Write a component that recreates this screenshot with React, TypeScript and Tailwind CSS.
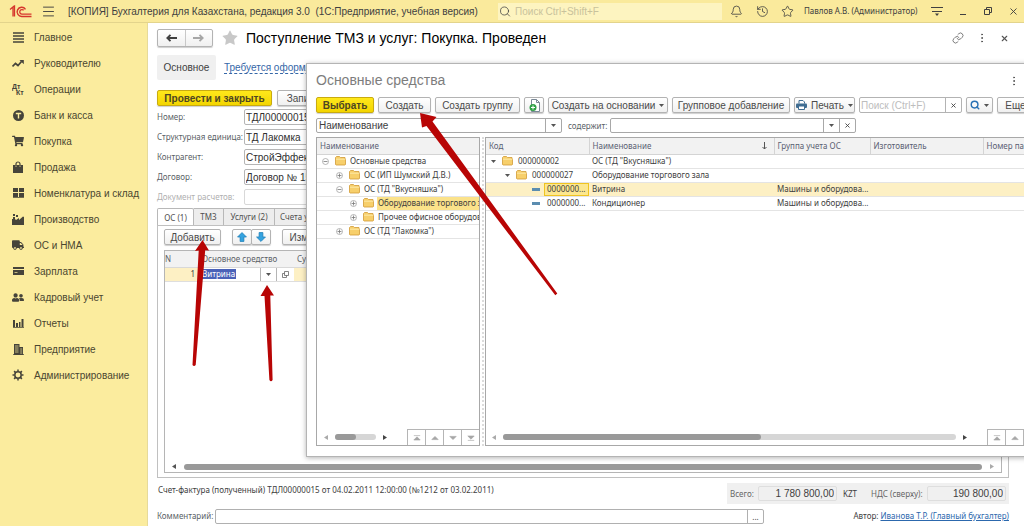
import type { ReactNode } from "react";
import {
  Bell,
  History,
  Link as LinkIcon,
  Menu,
  MoreVertical,
  Search,
  Star,
  X,
} from "lucide-react";
import { FaShoppingBag, FaShoppingCart, FaTruck, FaUserFriends } from "react-icons/fa";

type NavItem = { label: string; icon: ReactNode };

type TreeNode = {
  label: string;
  level: 0 | 1 | 2;
  open?: boolean;
  selected?: boolean;
};

type AssetRow = {
  id: number;
  code: string;
  name: string;
  group?: string;
  level: 0 | 1 | 2;
  folder?: boolean;
  selected?: boolean;
};

const smallTextClass = "font-['Noto_Sans',sans-serif] text-[8px]";
const buttonClass =
  "flex h-4 shrink-0 items-center justify-center gap-1 whitespace-nowrap rounded-xs border border-[#b3b3b3] bg-linear-to-b from-white to-[#f0f0f0] text-[10px] text-[#4a4a4a] shadow-[0_1px_1px_#cfcfcf]";
const primaryClass =
  "flex h-4 shrink-0 items-center justify-center whitespace-nowrap rounded-xs border border-[#c9ab10] bg-linear-to-b from-[#ffe81a] to-[#f3d500] text-[10px] font-bold text-[#4d4622] shadow-[0_1px_1px_#cfcfcf]";
const headCellClass =
  "whitespace-nowrap border-r border-[#d4d4d4] px-[3px] text-left font-normal text-[#5a5f73]";

const navItems: NavItem[] = [
  { label: "Главное", icon: <LinesIcon /> },
  { label: "Руководителю", icon: <TrendIcon /> },
  { label: "Операции", icon: <DebitCreditIcon /> },
  { label: "Банк и касса", icon: <CoinIcon /> },
  { label: "Покупка", icon: <FaShoppingCart size={12} /> },
  { label: "Продажа", icon: <BagIcon /> },
  { label: "Номенклатура и склад", icon: <BlocksIcon /> },
  { label: "Производство", icon: <FactoryIcon /> },
  { label: "ОС и НМА", icon: <FaTruck size={12} /> },
  { label: "Зарплата", icon: <CardIcon /> },
  { label: "Кадровый учет", icon: <FaUserFriends size={13} /> },
  { label: "Отчеты", icon: <BarsIcon /> },
  { label: "Предприятие", icon: <BuildingIcon /> },
  { label: "Администрирование", icon: <GearIcon /> },
];

const treeNodes: TreeNode[] = [
  { label: "Основные средства", level: 0, open: true },
  { label: "ОС (ИП Шумский Д.В.)", level: 1 },
  { label: 'ОС (ТД "Вкусняшка")', level: 1, open: true },
  { label: "Оборудование торгового зала", level: 2, selected: true },
  { label: "Прочее офисное оборудование", level: 2 },
  { label: 'ОС (ТД "Лакомка")', level: 1 },
];

const assetRows: AssetRow[] = [
  { id: 1, code: "000000002", name: 'ОС (ТД "Вкусняшка")', level: 0, folder: true },
  { id: 2, code: "000000027", name: "Оборудование торгового зала", level: 1, folder: true },
  {
    id: 3,
    code: "0000000...",
    name: "Витрина",
    group: "Машины и оборудова...",
    level: 2,
    selected: true,
  },
  {
    id: 4,
    code: "0000000...",
    name: "Кондиционер",
    group: "Машины и оборудова...",
    level: 2,
  },
];

const fields = [
  { id: "number", label: "Номер:", value: "ТДЛ00000015" },
  { id: "unit", label: "Структурная единица:", value: "ТД Лакомка" },
  { id: "partner", label: "Контрагент:", value: "СтройЭффект" },
  { id: "contract", label: "Договор:", value: "Договор № 15" },
  { id: "settlement", label: "Документ расчетов:", value: "", disabled: true },
];

export default function App() {
  return (
    <div className="relative flex min-h-screen flex-col overflow-hidden bg-white font-['Liberation_Sans',sans-serif] text-[10px] text-[#404040]">
      <TopBar />
      <div className="flex flex-1">
        <Sidebar />
        <main className="relative flex min-w-0 flex-1 flex-col overflow-hidden">
          <ReceiptForm />
          <AssetsDialog />
        </main>
      </div>
      <Pointers />
    </div>
  );
}

function TopBar() {
  return (
    <header className="flex h-[23px] shrink-0 items-center border-b border-[#e3d48c] bg-[#faea9c]">
      <div className="flex w-[68px] shrink-0 items-center gap-[9px] pl-[9px]">
        <LogoIcon />
        <button type="button" aria-label="Меню">
          <Menu size={15} strokeWidth={1.5} />
        </button>
      </div>
      <h1 className="w-[430px] shrink-0 whitespace-pre">
        [КОПИЯ] Бухгалтерия для Казахстана, редакция 3.0 {" "}(1С:Предприятие, учебная версия)
      </h1>
      <label className="flex h-[17px] flex-1 items-center gap-1 bg-[#fdf4c0] pl-px">
        <Search size={13} strokeWidth={1.5} />
        <input
          className="w-full bg-transparent outline-none placeholder:text-[#c9c29c]"
          placeholder="Поиск Ctrl+Shift+F"
          type="search"
        />
      </label>
      <div className="flex w-[302px] shrink-0 items-center pl-2">
        <button className="w-[26px]" type="button" aria-label="Уведомления">
          <Bell size={13} strokeWidth={1.5} />
        </button>
        <button className="w-[25px]" type="button" aria-label="История">
          <History size={13} strokeWidth={1.5} />
        </button>
        <button className="w-[23px]" type="button" aria-label="Избранное">
          <Star size={13} strokeWidth={1.5} />
        </button>
        <span className={`w-[127px] whitespace-nowrap ${smallTextClass}`}>
          Павлов А.В. (Администратор)
        </span>
        <button className="w-[28px]" type="button" aria-label="Настройки">
          <svg width="12" height="12" viewBox="0 0 12 12">
            <path d="M0 2.500h12M1 6.500h10" stroke="#404040" />
            <path d="M4 8.500h4l-2 2.500z" fill="#404040" />
          </svg>
        </button>
        <button className="w-[25px]" type="button" aria-label="Свернуть">
          <svg width="8" height="10" viewBox="0 0 8 10">
            <path d="M1 8.500h6" stroke="#404040" />
          </svg>
        </button>
        <button className="w-[24px]" type="button" aria-label="Восстановить">
          <svg width="8" height="8" viewBox="0 0 8 8" fill="none" stroke="#404040">
            <path d="M.5 2.500h5v5h-5zM2.500 2.500v-2h5v5h-2" />
          </svg>
        </button>
        <button type="button" aria-label="Закрыть">
          <X size={11} strokeWidth={2} />
        </button>
      </div>
    </header>
  );
}

function Sidebar() {
  return (
    <nav className="w-[148px] shrink-0 border-r border-[#e6da9a] bg-[#fbec9e] pt-px">
      <ul>
        {navItems.map((item) => (
          <li key={item.label}>
            <a className="flex h-[26px] items-center gap-[10px] pl-3 text-[#4a4630]" href="#">
              <span className="flex w-3 justify-center text-[#46443a]">{item.icon}</span>
              {item.label}
            </a>
          </li>
        ))}
      </ul>
    </nav>
  );
}

function ReceiptForm() {
  return (
    <form className="flex flex-1 flex-col pt-[5px] pr-[15px] pb-[2px] pl-[9px]">
      <div className="flex h-5 items-center">
        <div className="flex h-[18px] w-14 rounded-xs border border-[#b3b3b3] bg-linear-to-b from-white to-[#f0f0f0] shadow-[0_1px_1px_#cfcfcf]">
          <button
            className="flex flex-1 items-center justify-center border-r border-[#c8c8c8]"
            type="button"
            aria-label="Назад"
          >
            <ArrowIcon color="#404040" />
          </button>
          <button
            className="flex flex-1 items-center justify-center"
            type="button"
            aria-label="Вперед"
          >
            <span className="rotate-180">
              <ArrowIcon color="#a6a6a6" />
            </span>
          </button>
        </div>
        <Star className="ml-2 shrink-0" size={18} fill="#c8c8c8" stroke="none" />
        <h2 className="ml-[7px] flex-1 text-[14px] whitespace-nowrap text-black">
          Поступление ТМЗ и услуг: Покупка. Проведен
        </h2>
        <div className="flex w-[57px] items-center justify-between text-[#555]">
          <LinkIcon size={12} strokeWidth={1.5} />
          <MoreVertical size={12} />
          <X size={9} strokeWidth={3} />
        </div>
      </div>

      <div className="mt-[7px] flex h-[25px] items-center gap-2">
        <a
          className="flex h-full w-[59px] items-center justify-center rounded-xs bg-[#f0f0f0]"
          href="#"
        >
          Основное
        </a>
        <a
          className="border-b border-dashed border-[#3567a8] leading-[11px] whitespace-nowrap text-[#3567a8]"
          href="#"
        >
          Требуется оформление
        </a>
      </div>

      <div className="mt-[10px] flex gap-[5px]">
        <button className={`${primaryClass} w-[115px]`} type="button">
          Провести и закрыть
        </button>
        <button className={`${buttonClass} w-[62px]`} type="button">
          Записать
        </button>
      </div>

      <div className="mt-[3px] grid gap-1">
        {fields.map((field) => (
          <div key={field.id} className="flex h-4 items-center">
            <label
              className={
                field.disabled
                  ? `w-[87px] whitespace-nowrap text-[#b0b0b0] ${smallTextClass}`
                  : `w-[87px] whitespace-nowrap text-[#5a5f66] ${smallTextClass}`
              }
              htmlFor={field.id}
            >
              {field.label}
            </label>
            <input
              className="h-4 w-[200px] rounded-xs border border-[#b5b5b5] px-px text-[10px] text-[#303030] disabled:border-[#d8d8d8]"
              defaultValue={field.value}
              disabled={field.disabled}
              id={field.id}
              type="text"
            />
          </div>
        ))}
      </div>

      <div className={`mt-[3px] flex h-[17px] text-[#505050] ${smallTextClass}`}>
        <button
          className="-mb-px w-[37px] rounded-t-xs border border-b-0 border-[#b8b8b8] bg-white"
          type="button"
        >
          ОС (1)
        </button>
        <button className="w-[30px] border-t border-r border-[#b8b8b8] bg-[#ededed]" type="button">
          ТМЗ
        </button>
        <button className="w-[51px] border-t border-r border-[#b8b8b8] bg-[#ededed]" type="button">
          Услуги (2)
        </button>
        <button
          className="w-[72px] border-t border-r border-[#b8b8b8] bg-[#ededed] pl-[5px] text-left whitespace-nowrap"
          type="button"
        >
          Счета учета
        </button>
      </div>

      <section className="flex flex-1 flex-col border border-[#c0c0c0] px-1.5 pt-[3px] pb-1">
        <div className="flex">
          <button className={`${buttonClass} w-[57px]`} type="button">
            Добавить
          </button>
          <div className="ml-[11px] flex">
            <button className={`${buttonClass} w-5`} type="button" aria-label="Вверх">
              <BlueArrow />
            </button>
            <button className={`${buttonClass} -ml-px w-5`} type="button" aria-label="Вниз">
              <span className="rotate-180">
                <BlueArrow />
              </span>
            </button>
          </div>
          <button className={`${buttonClass} ml-[11px] w-[60px]`} type="button">
            Изменить
          </button>
        </div>

        <div className="mt-[5px] flex flex-1 flex-col border border-[#b5b5b5]">
          <table className={`w-full table-fixed ${smallTextClass}`}>
            <colgroup>
              <col className="w-[35px]" />
              <col className="w-[94px]" />
              <col />
            </colgroup>
            <thead>
              <tr className="h-4 border-b border-[#d8d8d8] bg-[#f2f2f2] text-left text-[#5a5f66]">
                <th className="font-normal">N</th>
                <th className="pl-0.5 font-normal">Основное средство</th>
                <th className="pl-[3px] font-normal">Сумма</th>
              </tr>
            </thead>
            <tbody>
              <tr className="h-[14px] border-b border-[#dedede] bg-[#fdf0c4]">
                <td className="pr-[5px] text-right">1</td>
                <td className="bg-white">
                  <div className="flex h-[13px] items-center pl-0.5">
                    <input
                      aria-label="Основное средство"
                      className="h-[10px] w-[34px] bg-[#4a62b8] leading-[10px] text-white"
                      defaultValue="Витрина"
                      type="text"
                    />
                    <button
                      className="ml-6 flex h-full w-[17px] items-center justify-center border-x border-[#b5b5b5]"
                      type="button"
                      aria-label="Выбрать"
                    >
                      <Caret />
                    </button>
                    <button
                      className="flex h-full w-4 items-center justify-center"
                      type="button"
                      aria-label="Открыть"
                    >
                      <svg
                        width="7"
                        height="7"
                        viewBox="0 0 7 7"
                        fill="none"
                        stroke="#666"
                        strokeWidth=".8"
                      >
                        <path d="M2.500 .5h4v4h-4zM2.500 2.500h-2v4h4v-2" />
                      </svg>
                    </button>
                  </div>
                </td>
                <td />
              </tr>
            </tbody>
          </table>
          <div className="mt-auto flex h-[11px] items-center gap-2 px-[7px]">
            <Triangle dir="left" color="#555" />
            <div className="h-1.5 flex-1 rounded-full bg-[#999]" />
            <Triangle dir="right" color="#aaa" />
          </div>
        </div>
      </section>

      <div className={`mt-[5px] flex h-[21px] items-center justify-between ${smallTextClass}`}>
        <span className="pb-2 pl-px whitespace-nowrap">
          Счет-фактура (полученный) ТДЛ00000015 от 04.02.2011 12:00:00 (№1212 от 03.02.2011)
        </span>
        <div className="flex h-full items-center bg-[#f0f0f0] px-[3px] whitespace-nowrap text-[#666]">
          <label className="w-7" htmlFor="total">
            Всего:
          </label>
          <input
            className="h-[15px] w-[79px] rounded-xs border border-[#dedede] pr-0.5 text-right font-['Liberation_Sans',sans-serif] text-[10px] text-[#404040]"
            defaultValue="1 780 800,00"
            id="total"
            readOnly
          />
          <span className="ml-1.5 w-[28px] text-[#404040]">KZT</span>
          <label className="w-[56px]" htmlFor="vat">
            НДС (сверху):
          </label>
          <input
            className="h-[15px] w-[79px] rounded-xs border border-[#dedede] pr-0.5 text-right font-['Liberation_Sans',sans-serif] text-[10px] text-[#404040]"
            defaultValue="190 800,00"
            id="vat"
            readOnly
          />
        </div>
      </div>

      <div className={`mt-1 flex h-4 items-center ${smallTextClass}`}>
        <label className="w-[58px] text-[#5a5f66]" htmlFor="comment">
          Комментарий:
        </label>
        <div className="flex h-[15px] w-[549px] rounded-xs border border-[#b0b0b0]">
          <input className="min-w-0 flex-1 px-1" id="comment" type="text" />
          <button className="w-4 border-l border-[#b0b0b0] leading-[9px]" type="button">
            ...
          </button>
        </div>
        <p className="ml-auto whitespace-nowrap">
          Автор:{" "}
          <a className="text-[#2c68ad] underline" href="#">
            Иванова Т.Р. (Главный бухгалтер)
          </a>
        </p>
      </div>
    </form>
  );
}

function AssetsDialog() {
  return (
    <section
      aria-label="Основные средства"
      className="absolute top-10 -right-[46px] bottom-[69px] left-[158px] flex flex-col border border-[#b4b4b4] bg-white pr-[9px] pb-[10px] pl-[9px] shadow-[0_1px_5px_rgba(0,0,0,0.3)]"
      role="dialog"
    >
      <div className="flex h-[33px] items-center justify-between pr-10">
        <h2 className="text-[14px] text-[#7d7d7d]">Основные средства</h2>
        <button type="button" aria-label="Действия">
          <MoreVertical size={12} color="#555" />
        </button>
      </div>

      <div className="flex gap-1">
        <button className={`${primaryClass} w-[58px]`} type="button">
          Выбрать
        </button>
        <button className={`${buttonClass} w-[53px]`} type="button">
          Создать
        </button>
        <button className={`${buttonClass} w-[85px]`} type="button">
          Создать группу
        </button>
        <button className={`${buttonClass} w-5`} type="button" aria-label="Создать копированием">
          <svg width="11" height="13" viewBox="0 0 11 13">
            <path d="M2.500 .5h5l3 3v9h-8z" fill="#fff" stroke="#7a8896" />
            <path d="M7.500 .5v3h3" fill="none" stroke="#7a8896" />
            <circle cx="4" cy="8.500" r="3.500" fill="#2fa046" />
            <path d="M4 6.500v4M2 8.500h4" stroke="#fff" />
          </svg>
        </button>
        <button className={`${buttonClass} w-[120px]`} type="button">
          Создать на основании <Caret />
        </button>
        <button className={`${buttonClass} w-[118px]`} type="button">
          Групповое добавление
        </button>
        <button className={`${buttonClass} w-[61px]`} type="button">
          <PrinterIcon />
          <span>Печать</span>
          <Caret />
        </button>
        <div className="flex h-4 w-[103px] shrink-0 rounded-xs border border-[#b3b3b3]">
          <input
            aria-label="Поиск"
            className="min-w-0 flex-1 px-px text-[10px] placeholder:text-[#bdbdbd]"
            placeholder="Поиск (Ctrl+F)"
            type="text"
          />
          <button
            className="flex w-4 items-center justify-center border-l border-[#b3b3b3]"
            type="button"
            aria-label="Очистить"
          >
            <X size={7} strokeWidth={3} />
          </button>
        </div>
        <button className={`${buttonClass} w-[27px]`} type="button" aria-label="Найти">
          <Search size={10} color="#2a72b5" strokeWidth={3.5} />
          <Caret />
        </button>
        <button className={`${buttonClass} w-[46px]`} type="button">
          Еще <Caret />
        </button>
      </div>

      <div className="mt-[5px] flex h-[15px] items-center">
        <div className="flex h-full w-[246px] items-center rounded-xs border border-[#a8a8a8]">
          <select
            aria-label="Поле поиска"
            className="h-full flex-1 appearance-none px-0.5 text-[10px] leading-3"
            defaultValue="name"
          >
            <option value="name">Наименование</option>
            <option value="code">Код</option>
          </select>
          <span className="flex h-full w-4 items-center justify-center border-l border-[#a8a8a8]">
            <Caret />
          </span>
        </div>
        <label
          className={`w-12 pl-1.5 whitespace-nowrap text-[#5a5f66] ${smallTextClass}`}
          htmlFor="contains"
        >
          содержит:
        </label>
        <div className="flex h-full w-[246px] items-center rounded-xs border border-[#a8a8a8]">
          <input className="h-full min-w-0 flex-1 px-1" id="contains" type="text" />
          <button
            className="flex h-full w-4 items-center justify-center border-l border-[#a8a8a8]"
            type="button"
            aria-label="Список"
          >
            <Caret />
          </button>
          <button
            className="flex h-full w-4 items-center justify-center border-l border-[#a8a8a8]"
            type="button"
            aria-label="Очистить отбор"
          >
            <X size={7} strokeWidth={3} />
          </button>
        </div>
      </div>

      <div className={`mt-1 flex min-h-0 flex-1 ${smallTextClass}`}>
        <GroupTree />
        <div className="mr-px ml-0.5 w-[2px] border-l-2 border-dotted border-[#dcdcdc]" />
        <AssetTable />
      </div>
    </section>
  );
}

function GroupTree() {
  return (
    <div className="flex w-[164px] shrink-0 flex-col border border-[#a8a8a8]">
      <table className="w-full table-fixed">
        <thead>
          <tr className="h-4 border-b border-[#d4d4d4] bg-[#f2f2f2]">
            <th className="px-[3px] text-left font-normal text-[#5a5f73]">Наименование</th>
          </tr>
        </thead>
        <tbody>
          {treeNodes.map((node) => (
            <tr key={node.label} className="h-[14px] border-b border-[#e4e4e4]">
              <td className="overflow-hidden">
                <div className={`flex h-[13px] items-center ${treeIndentClass(node.level)}`}>
                  <ToggleIcon open={node.open} />
                  <span className="mr-[3px] ml-[6px] shrink-0">
                    <FolderIcon />
                  </span>
                  <span
                    className={
                      node.selected
                        ? "flex h-[13px] flex-1 items-center bg-[#fbe28a] pl-px whitespace-nowrap"
                        : "pl-px whitespace-nowrap"
                    }
                  >
                    {node.label}
                  </span>
                </div>
              </td>
            </tr>
          ))}
        </tbody>
      </table>
      <div className="mt-auto flex h-4 items-center pl-[7px]">
        <Triangle dir="left" color="#aaa" />
        <div className="mx-[7px] h-1.5 flex-1 rounded-full bg-[#d6d6d6]">
          <div className="h-full w-1/2 rounded-full bg-[#999]" />
        </div>
        <Triangle dir="right" color="#444" />
        <span className="w-5" />
        <PageButtons />
      </div>
    </div>
  );
}

function AssetTable() {
  return (
    <div className="flex min-w-0 flex-1 flex-col border border-[#a8a8a8]">
      <table className="w-full table-fixed">
        <colgroup>
          <col className="w-[103px]" />
          <col className="w-[185px]" />
          <col className="w-[96px]" />
          <col className="w-[113px]" />
          <col />
        </colgroup>
        <thead>
          <tr className="h-4 border-b border-[#d4d4d4] bg-[#f2f2f2]">
            <th className={headCellClass}>Код</th>
            <th className={headCellClass}>
              <div className="flex items-center justify-between pr-1">
                Наименование
                <svg width="5" height="8" viewBox="0 0 5 8" fill="none" stroke="#555">
                  <path d="M2.500 0v7M.5 5l2 2 2-2" />
                </svg>
              </div>
            </th>
            <th className={headCellClass}>Группа учета ОС</th>
            <th className={headCellClass}>Изготовитель</th>
            <th className="px-[3px] text-left font-normal whitespace-nowrap text-[#5a5f73]">
              Номер паспорта
            </th>
          </tr>
        </thead>
        <tbody>
          {assetRows.map((row) => (
            <tr
              key={row.id}
              className={
                row.selected
                  ? "h-[14px] border-b border-[#e4e4e4] bg-[#fdf0c4]"
                  : "h-[14px] border-b border-[#e4e4e4]"
              }
            >
              <td>
                <div className={`flex h-[13px] items-center ${rowIndentClass(row.level)}`}>
                  {row.folder ? (
                    <>
                      <Caret />
                      <span className="mr-[5px] ml-1.5">
                        <FolderIcon />
                      </span>
                      {row.code}
                    </>
                  ) : (
                    <>
                      <span className="mr-1 h-[3px] w-2 shrink-0 bg-[#5b8db0]" />
                      <span
                        className={
                          row.selected
                            ? "flex h-[13px] w-[45px] items-center border border-[#f0c420] bg-[#fce78f] pl-0.5"
                            : "flex h-[13px] w-[45px] items-center border border-transparent pl-0.5"
                        }
                      >
                        {row.code}
                      </span>
                    </>
                  )}
                </div>
              </td>
              <td className="px-[3px] whitespace-nowrap">{row.name}</td>
              <td className="px-[3px] whitespace-nowrap">{row.group}</td>
              <td />
              <td />
            </tr>
          ))}
        </tbody>
      </table>
      <div className="mt-auto flex h-4 items-center pl-1.5">
        <Triangle dir="left" color="#aaa" />
        <div className="mx-[7px] h-1.5 flex-1 rounded-full bg-[#d6d6d6]">
          <div className="h-full w-[57%] rounded-full bg-[#999]" />
        </div>
        <Triangle dir="right" color="#444" />
        <span className="w-5" />
        <PageButtons />
      </div>
    </div>
  );
}

function PageButtons() {
  const buttons = [
    { label: "В начало", path: "M1 .5h8M5 2l4 4h-8z" },
    { label: "Назад", path: "M5 1.500l4 4h-8z" },
    { label: "Вперед", path: "M5 5.500l4-4h-8z" },
    { label: "В конец", path: "M1 6.500h8M5 5l4-4h-8z" },
  ];

  return (
    <div className="flex h-4 shrink-0">
      {buttons.map((button) => (
        <button
          key={button.label}
          className="flex w-[18px] items-center justify-center border-t border-l border-[#b5b5b5]"
          type="button"
          aria-label={button.label}
        >
          <svg width="8" height="6" viewBox="0 0 10 7" fill="#a6a6a6" stroke="#a6a6a6">
            <path d={button.path} strokeWidth=".8" />
          </svg>
        </button>
      ))}
    </div>
  );
}

// Red pointers laid over the whole window
function Pointers() {
  return (
    <svg
      aria-hidden="true"
      className="pointer-events-none absolute inset-0 h-full w-full"
      fill="#b80505"
    >
      <path d="M202.500 240L209 250.500L205.200 250.200L195.700 365Q194 367 192.500 365L198.700 250.500L195 251z" />
      <path d="M267 285L274 295.500L270.300 295.500L272.600 380Q271 382.500 269.400 380L264.500 296L260.500 296z" />
      <path d="M420 113L436.500 117L432.500 121.500L557.300 293.500L555.300 295.200L426.500 126L422 127.500z" />
    </svg>
  );
}

function treeIndentClass(level: TreeNode["level"]) {
  const classes = { 0: "pl-[5px]", 1: "pl-[19px]", 2: "pl-[33px]" };

  return classes[level];
}

function rowIndentClass(level: AssetRow["level"]) {
  const classes = { 0: "pl-[5px]", 1: "pl-[19px]", 2: "pl-[46px]" };

  return classes[level];
}

function Caret() {
  return (
    <svg className="shrink-0" width="5" height="3" viewBox="0 0 5 3">
      <path d="M0 0h5l-2.500 3z" fill="#555" />
    </svg>
  );
}

function Triangle({ dir, color }: { dir: "left" | "right"; color: string }) {
  return (
    <svg className="shrink-0" width="4" height="5" viewBox="0 0 4 5" fill={color}>
      <path d={dir === "left" ? "M4 0v5l-4-2.500z" : "M0 0v5l4-2.500z"} />
    </svg>
  );
}

function ToggleIcon({ open }: { open?: boolean }) {
  return (
    <svg className="shrink-0" width="7" height="7" viewBox="0 0 7 7" fill="none" stroke="#999">
      <circle cx="3.500" cy="3.500" r="3" strokeWidth=".7" />
      <path d={open ? "M1.500 3.500h4" : "M1.500 3.500h4M3.500 1.500v4"} stroke="#777" strokeWidth=".8" />
    </svg>
  );
}

function FolderIcon() {
  return (
    <svg className="shrink-0" width="11" height="10" viewBox="0 0 11 10">
      <path
        d="M.5 8.500v-7l1-1h3l1 1h4.500v1.500h.5v5.500l-.5.500h-9z"
        fill="#f7cf6b"
        stroke="#d29a35"
        strokeWidth=".8"
      />
      <path d="M1 3.200h9.500" stroke="#fff0b8" strokeWidth=".8" />
    </svg>
  );
}

function ArrowIcon({ color }: { color: string }) {
  return (
    <svg width="11" height="8" viewBox="0 0 11 8" fill="none" stroke={color} strokeWidth="1.800">
      <path d="M11 4h-9.500M4.500 .8l-3.200 3.200 3.200 3.200" />
    </svg>
  );
}

function BlueArrow() {
  return (
    <svg width="10" height="10" viewBox="0 0 9 9">
      <path
        d="M4.500 .5l4 4h-2.300v4h-3.400v-4h-2.300z"
        fill="#34a3e0"
        stroke="#1f7fb8"
        strokeWidth=".7"
      />
    </svg>
  );
}

function PrinterIcon() {
  return (
    <svg className="shrink-0" width="11" height="10" viewBox="0 0 11 10">
      <path d="M3 3.500v-3h4l1.500 1.500v1.500" fill="#fff" stroke="#3f6d92" />
      <rect y="3.500" width="11" height="4.500" rx="1" fill="#3f6d92" />
      <path d="M2.500 6h6v3.500h-6z" fill="#fff" stroke="#3f6d92" />
    </svg>
  );
}

function LogoIcon() {
  return (
    <svg width="23" height="13" viewBox="0 0 23 13" fill="none" stroke="#d6362c">
      <path d="M1 4.500l3-2.500v9.500M5.500 11.500v-10.500l-2 1.200" strokeWidth="1.300" />
      <path d="M16.500 4.300a4.600 4.600 0 1 0-3.500 7.200h9.500" strokeWidth="1.400" />
      <path d="M14.700 5.300a2.300 2.300 0 1 0-1.700 3.900h9.500" strokeWidth="1.300" />
    </svg>
  );
}

function LinesIcon() {
  return (
    <svg width="11" height="11" viewBox="0 0 11 11" stroke="currentColor" strokeWidth="1.400">
      <path d="M0 1h11M0 4h11M0 7h11M0 10h11" />
    </svg>
  );
}

function TrendIcon() {
  return (
    <svg width="12" height="9" viewBox="0 0 12 9">
      <path d="M.5 7.500l3-3 2.500 2 3.500-4" fill="none" stroke="currentColor" strokeWidth="1.700" />
      <path d="M7.500 1h4.300v4.300z" fill="currentColor" />
    </svg>
  );
}

function DebitCreditIcon() {
  return (
    <svg
      className="shrink-0"
      width="13"
      height="12"
      viewBox="0 0 13 12"
      fill="currentColor"
      fontSize="7"
      fontWeight="bold"
    >
      <text x="0" y="6">Дт</text>
      <text x="4" y="12">Кт</text>
    </svg>
  );
}

function CoinIcon() {
  return (
    <svg width="11" height="11" viewBox="0 0 11 11">
      <circle cx="5.500" cy="5.500" r="5.500" fill="currentColor" />
      <path d="M2.800 3.500h5.400M5.500 3.500v5" stroke="#fbec9e" strokeWidth="1.400" />
    </svg>
  );
}

function BagIcon() {
  return (
    <svg width="10" height="12" viewBox="0 0 10 12">
      <path d="M0 4h10v8H0z" fill="currentColor" />
      <path d="M3 6V3a2 2 0 0 1 4 0v3" fill="none" stroke="currentColor" strokeWidth="1.200" />
      <path d="M3 4.500v1.500M7 4.500v1.500" stroke="#fbec9e" strokeWidth=".7" />
    </svg>
  );
}

function BlocksIcon() {
  return (
    <svg width="11" height="10" viewBox="0 0 11 10" fill="currentColor">
      <path d="M0 0h5v4H0zM6 0h5v4H6zM0 5h5v4H0zM6 5h5v4H6zM0 9.300h11v.7H0z" />
    </svg>
  );
}

function FactoryIcon() {
  return (
    <svg width="12" height="11" viewBox="0 0 12 11" fill="currentColor">
      <path d="M0 11V5h1V3h2v2l1 1 3-2v2l4-3.500 1 .5v8zM1 0h2v2H1zM4 1h2v2H4z" />
    </svg>
  );
}

function CardIcon() {
  return (
    <svg width="11" height="8" viewBox="0 0 11 8" fill="currentColor">
      <path d="M0 0h11v2H0zM0 3h11v5H0z" />
      <path d="M1.500 5.500h3" stroke="#fbec9e" strokeWidth=".7" />
    </svg>
  );
}

function BarsIcon() {
  return (
    <svg width="11" height="9" viewBox="0 0 11 9" fill="currentColor">
      <path d="M0 1h2v7H0zM3 4h2v4H3zM6 3h1.500v5H6zM8.500 0h2v8h-2zM0 8.200h11V9H0z" />
    </svg>
  );
}

function BuildingIcon() {
  return (
    <svg width="11" height="11" viewBox="0 0 11 11">
      <path d="M1 0h5.500v11H1zM6.500 3H10v8H6.500zM0 10.200h11v.8H0z" fill="currentColor" />
      <path
        d="M2 2h3.500M2 4h3.500M2 6h3.500M2 8h3.500M7.200 5h2M7.200 7h2M7.200 9h2"
        stroke="#fbec9e"
        strokeWidth=".7"
      />
    </svg>
  );
}

function GearIcon() {
  return (
    <svg width="12" height="12" viewBox="0 0 12 12" fill="none" stroke="currentColor">
      <circle cx="6" cy="6" r="3.200" strokeWidth="1.500" />
      <path
        d="M6 .5v2M6 9.500v2M.5 6h2M9.500 6h2M2.100 2.100l1.500 1.500M8.400 8.400l1.500 1.500M2.100 9.900l1.500-1.500M8.400 3.600l1.500-1.500"
        strokeWidth="1.500"
      />
    </svg>
  );
}
